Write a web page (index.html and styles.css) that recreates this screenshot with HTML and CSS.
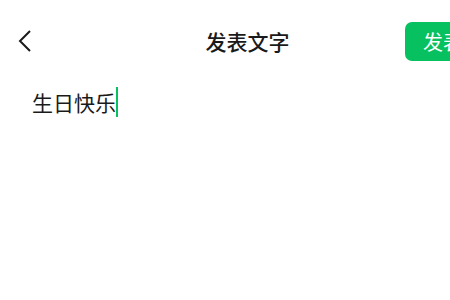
FILE: index.html
```html
<!DOCTYPE html>
<html lang="zh-CN">
<head>
    <meta charset="UTF-8">
    <meta name="viewport" content="width=device-width, initial-scale=1.0">
    <title>发表文字</title>
    <link rel="stylesheet" href="styles.css">
</head>
<body>
    <div class="page">
        <header class="top-bar">
            <div class="back">
                <svg width="14" height="22" viewBox="0 0 14 22">
                    <path d="M12 1 L2 11 L12 21" fill="none" stroke="#1a1a1a" stroke-width="2" stroke-linejoin="miter"/>
                </svg>
            </div>
            <h1 class="title">发表文字</h1>
            <button class="send" type="button">发表</button>
        </header>
        <div class="editor">
            <span class="text">生日快乐</span><span class="cursor"></span>
        </div>
    </div>
</body>
</html>
```

FILE: styles.css
```css
:root {
    --green: #07c160;
    --text-color: #1a1a1a;
}

body {
    margin: 0;
    background: #fff;
    font-family: "Noto Sans CJK SC", "Noto Sans", sans-serif;
    color: var(--text-color);
    overflow: hidden;
}

.page {
    width: 450px;
    height: 300px;
    overflow: hidden;
}

.top-bar {
    display: flex;
    align-items: center;
    height: 82px;
}

.back {
    width: 72px;
    padding-left: 18px;
    display: flex;
    align-items: center;
}

.title {
    flex: 1;
    margin: 0;
    text-align: center;
    font-size: 21px;
    font-weight: 500;
    line-height: 30px;
}

.send {
    flex-shrink: 0;
    margin-right: -25px;
    height: 39px;
    width: 70px;
    padding: 0 0 0 18px;
    text-align: left;
    border: none;
    border-radius: 7px;
    background: var(--green);
    color: #fff;
    font-family: inherit;
    font-size: 20px;
}

.editor {
    display: flex;
    align-items: center;
    padding: 5px 0 0 32px;
}

.text {
    font-size: 21px;
    line-height: 30px;
}

.cursor {
    width: 2px;
    height: 30px;
    background: var(--green);
}
```
